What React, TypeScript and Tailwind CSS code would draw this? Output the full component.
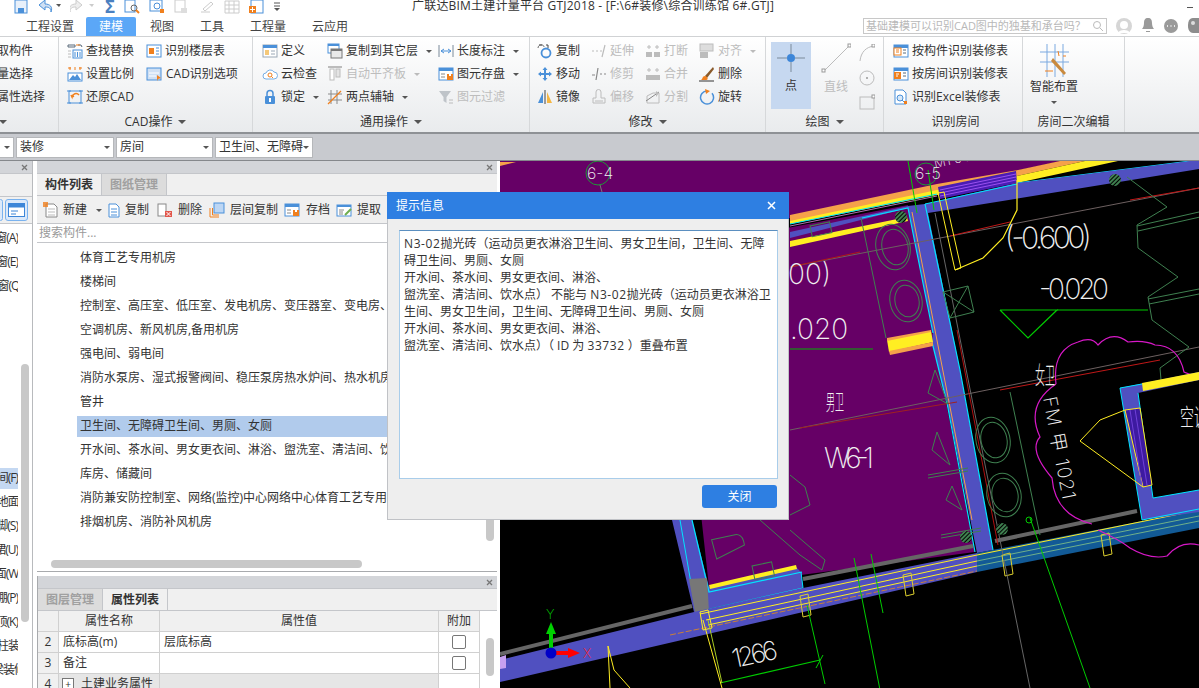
import React from 'react';

const B = '#4a90d9';
const O = '#f0801e';
const G = '#bcbcbc';
const D = '#5a6a7a';

// 16x16 ribbon glyphs
const icons: Record<string, React.ReactNode> = {
  find: (<><path d="M1 2h7v2H1zM11 2h3l1 2" fill="none" stroke={D} /><path d="M9 2h4" stroke={O} /><rect x="6" y="7" width="9" height="8" fill="none" stroke={B} /><path d="M8 9v5M10.500 9v5M13 9v5" stroke={B} /><path d="M1 8h3M1 11h3M1 14h3" stroke={G} /></>),
  floor: (<><rect x="1" y="2" width="14" height="12" fill="#fff" stroke={B} /><rect x="3" y="5" width="5" height="6" fill={O} /><path d="M10 5h3M10 8h3M10 11h3" stroke={B} /></>),
  scale: (<><path d="M1 2h3M12 2h3M8 1v3M3 1v3M13 1v3" stroke={O} /><rect x="1" y="7" width="14" height="8" fill="#fff" stroke={B} /><path d="M2 14l4-5 2 2 2-3 4 6z" fill={B} /></>),
  cadopt: (<><rect x="1" y="2" width="14" height="12" fill="#cfe0f4" stroke={B} /><path d="M3 7h10M3 10h7" stroke="#fff" /><path d="M11 9l4 3-3 1-1 2z" fill={O} /></>),
  restore: (<><rect x="2" y="2" width="12" height="12" fill="none" stroke={B} /><path d="M0 2h4M0 14h4M12 2h4M12 14h4" stroke={B} /><path d="M12 6a4 4 0 0 0-7 2l-1-2M5 8l2-1" fill="none" stroke={O} strokeWidth="1.500" /></>),
  define: (<><rect x="1" y="2" width="14" height="12" fill="#fff" stroke="#9aa7b5" /><rect x="1" y="2" width="14" height="3" fill={B} /><rect x="3" y="7" width="4" height="5" fill="#f5c878" /><path d="M9 8h4M9 11h4" stroke="#9aa7b5" /></>),
  cloud: (<><path d="M4 13a3 3 0 0 1 0-6 4.500 4.500 0 0 1 8-1 3.500 3.500 0 0 1 0 7z" fill="#fff" stroke="#77aee4" /><circle cx="8" cy="9" r="2" fill="none" stroke={O} /><path d="M9.500 10.500l1.500 1.500" stroke={O} /></>),
  lock: (<><path d="M5 7V4.500a3 3 0 0 1 6 0V7" fill="none" stroke={B} strokeWidth="1.500" /><rect x="3" y="7" width="10" height="8" rx="1" fill={B} /><rect x="7" y="9" width="2" height="4" fill="#fff" /></>),
  copyfl: (<><rect x="1" y="1" width="11" height="9" fill="#fff" stroke={B} /><rect x="1" y="1" width="11" height="2" fill={B} /><rect x="4" y="6" width="11" height="9" fill="#e9e9e9" stroke="#777" /><rect x="4" y="6" width="11" height="2" fill="#777" /></>),
  align: (<><path d="M1 1h14" stroke={G} strokeWidth="2" /><rect x="3" y="3" width="4" height="11" fill="#fff" stroke={G} /><rect x="9" y="3" width="4" height="8" fill="#e4e4e4" stroke={G} /></>),
  axis: (<><path d="M4 1v14M10 1v14M1 5h14M1 11h14" stroke="#8a8a8a" /><path d="M1 15L14 2" stroke={O} strokeWidth="1.200" /></>),
  dim: (<><path d="M1 2v12M15 2v12" stroke="#7a8a9a" /><path d="M3 8h10M3 8l3-2M3 8l3 2M13 8l-3-2M13 8l-3 2" stroke={B} fill="none" /></>),
  save: (<><rect x="1" y="2" width="14" height="12" fill="#fff" stroke={B} /><rect x="1" y="2" width="14" height="3" fill={B} /><path d="M3 8h4M3 11h4" stroke="#888" /><rect x="9" y="8" width="6" height="6" fill={O} /><rect x="11" y="8" width="2" height="2" fill="#fff" /></>),
  filter: (<><path d="M1 2h12L8.500 8v6l-3-2V8z" fill="#bfc4c9" /><path d="M11 11h4M11 14h4" stroke={G} /></>),
  copy: (<><path d="M2 2h3M9 2h2v3" stroke="#444" fill="none" /><circle cx="9" cy="10" r="4.500" fill="none" stroke={B} strokeWidth="1.800" /><path d="M1 5c0-4 6-4 6-1" fill="none" stroke="#666" /></>),
  extend: (<path d="M1 8h2M5 8h2M9 8h2M14 2l-3 12" stroke={G} fill="none" strokeWidth="1.200" />),
  brk: (<><rect x="1" y="9" width="6" height="5" fill={G} /><rect x="9" y="9" width="6" height="5" fill={G} /><path d="M4 2v4M2 4h4M12 2v4M10 4h4" stroke={G} /></>),
  alignR: (<><rect x="1" y="1" width="13" height="7" fill="#ddd" stroke={G} /><rect x="1" y="9" width="8" height="6" fill={G} /></>),
  move: (<path d="M8 1l2.500 3h-5zM8 15l-2.500-3h5zM1 8l3-2.500v5zM15 8l-3 2.500v-5zM7 4h2v8H7zM4 7h8v2H4z" fill={B} />),
  trim: (<path d="M1 9h3M9 8h2M13 8h2M7 2L5 14" stroke="#888" fill="none" strokeWidth="1.200" />),
  merge: (<><rect x="1" y="9" width="14" height="5" fill={G} /><path d="M4 2v4M2 4h4M12 2v4M10 4h4" stroke={G} /></>),
  del: (<><path d="M14 1L6 10l2 2 7-9z" fill="#8a5a2a" /><path d="M6 10c-3 0-2 3-4 4h5c2 0 2-2 1-3z" fill={O} /><path d="M0 15h15" stroke="#333" /></>),
  mirror: (<><path d="M1 14L6 3v11z" fill={B} /><path d="M8 1v14" stroke="#444" /><path d="M10 3l5 11h-5z" fill="#f5b642" /></>),
  offset: (<path d="M2 14V9h3V3a2 2 0 0 1 5 0v6h4v5zM4 12h8" fill="none" stroke={G} />),
  split: (<><path d="M2 14V7l6-3h6v10z" fill="none" stroke={G} /><path d="M1 12L14 3" stroke="#888" /><path d="M11 2l3 2-3 4z" fill={G} /></>),
  rotate: (<><path d="M8 2a6.500 6.500 0 1 0 5 2.300" fill="none" stroke={B} strokeWidth="1.500" /><path d="M6 0l5 2-4 3z" fill={O} /></>),
  byPart: (<><rect x="1" y="2" width="14" height="12" fill="#fff" stroke={B} /><rect x="1" y="2" width="14" height="3" fill={B} /><rect x="1" y="5" width="7" height="7" fill="#fff" stroke={O} /><path d="M3 7h3M3 9h3" stroke={O} /><path d="M10 7h3M10 10h3" stroke={D} /></>),
  byRoom: (<><rect x="1" y="2" width="14" height="12" fill="#fff" stroke={B} /><rect x="1" y="2" width="14" height="3" fill={B} /><rect x="1" y="6" width="7" height="7" fill={O} /><path d="M3 8h3M3 10h2" stroke="#fff" /><path d="M10 7h3M10 10h3" stroke={D} /></>),
  excel: (<><path d="M2 1h8l3 3v11H2z" fill="#fff" stroke={B} /><circle cx="7" cy="9" r="3" fill="#d7e8f8" stroke={B} /><path d="M9 11l2 2" stroke={B} /><rect x="11" y="12" width="3" height="3" fill={O} /></>),
  newItem: (<><path d="M3 2h8l3 3v10H3z" fill="#fff" stroke="#888" /><path d="M5 7h7M5 10h7M5 13h7" stroke="#bbb" /><rect x="0" y="0" width="5" height="5" fill={O} opacity=".8" /></>),
  dup: (<><path d="M3 2h7l3 3v10H3z" fill="#fff" stroke={B} /><path d="M5 7h6M5 10h6M5 13h6" stroke={B} /></>),
  remove: (<><rect x="1" y="2" width="8" height="12" fill="#fff" stroke="#888" /><rect x="8" y="9" width="7" height="6" fill="#e2574c" /><path d="M9.500 10l4 4M13.500 10l-4 4" stroke="#fff" /></>),
  floorCopy: (<><rect x="5" y="1" width="10" height="10" fill="#bcd6f4" stroke={B} /><path d="M1 15V6M1 15h9M3.500 13V6M3.500 13H10" stroke={O} fill="none" /></>),
  pick: (<><rect x="1" y="3" width="14" height="11" fill="#fff" stroke={B} /><rect x="1" y="3" width="14" height="2" fill={B} /><path d="M3 8h5M3 10h4M3 12h4" stroke="#888" /><path d="M9 13l6-6" stroke="#6fae4e" strokeWidth="2" /></>),
};

function Icon({ name, size = 16 }: { name: string; size?: number }) {
  return (
    <svg width={size} height={size} viewBox="0 0 16 16" className="shrink-0">
      {icons[name]}
    </svg>
  );
}

function Caret({ off }: { off?: boolean }) {
  return <span className={`inline-block w-0 h-0 border-x-[3px] border-x-transparent border-t-[3px] ml-[5px] ${off ? 'border-t-[#bbbbbb]' : 'border-t-[#555555]'}`} />;
}

function Item({ icon, text, caret, off, gap = 'gap-[3px]' }: { icon: string; text: string; caret?: boolean; off?: boolean; gap?: string }) {
  return (
    <div className={`flex items-center h-4 whitespace-nowrap text-xs ${gap} ${off ? 'text-[#bdbdbd]' : 'text-[#333333]'}`}>
      <Icon name={icon} />
      <span>{text}</span>
      {caret && <Caret off={off} />}
    </div>
  );
}

function Col({ className, children }: { className: string; children: React.ReactNode }) {
  return <div className={`flex flex-col gap-[7px] ${className}`}>{children}</div>;
}

function Group({ label, caret, className, foot = 'justify-center', children }: { label?: string; caret?: boolean; className: string; foot?: string; children: React.ReactNode }) {
  return (
    <div className={`flex flex-col h-full shrink-0 border-r border-[#d6d8da] ${className}`}>
      <div className="flex h-[74px] pt-[6px]">{children}</div>
      <div className={`flex-1 flex items-center text-xs text-[#333333] whitespace-nowrap pt-[1px] ${foot}`}>
        {label}
        {caret && <span className="w-0 h-0 ml-[6px] border-x-[4px] border-x-transparent border-t-[4px] border-t-[#555555]" />}
      </div>
    </div>
  );
}

function Ribbon() {
  return (
    <div className="h-[98px] flex overflow-hidden bg-gradient-to-b from-white to-[#e9ebed] border-y border-[#d0d2d4] border-b-2 border-b-[#8e9195]">
      <Group className="w-[59px]" caret foot="justify-start -ml-[7px]">
        <div className="flex flex-col gap-[7px] text-xs text-[#333333] -ml-[3px] whitespace-nowrap">
          <div className="h-4 leading-4">取构件</div>
          <div className="h-4 leading-4">量选择</div>
          <div className="h-4 leading-4">属性选择</div>
        </div>
      </Group>
      <Group className="w-[194px] pl-[8px]" label="CAD操作" caret foot="justify-center -ml-[8px]">
        <Col className="w-[79px]">
          <Item icon="find" text="查找替换" />
          <Item icon="scale" text="设置比例" />
          <Item icon="restore" text="还原CAD" />
        </Col>
        <Col className="w-[100px]">
          <Item icon="floor" text="识别楼层表" />
          <Item icon="cadopt" text="CAD识别选项" gap="gap-[4px]" />
        </Col>
      </Group>
      <Group className="w-[277px] pl-[9px]" label="通用操作" caret foot="justify-center -ml-[9px]">
        <Col className="w-[65px]">
          <Item icon="define" text="定义" />
          <Item icon="cloud" text="云检查" />
          <Item icon="lock" text="锁定" caret />
        </Col>
        <Col className="w-[111px]">
          <Item icon="copyfl" text="复制到其它层" caret />
          <Item icon="align" text="自动平齐板" caret off />
          <Item icon="axis" text="两点辅轴" caret />
        </Col>
        <Col className="w-[88px]">
          <Item icon="dim" text="长度标注" caret />
          <Item icon="save" text="图元存盘" caret />
          <Item icon="filter" text="图元过滤" off />
        </Col>
      </Group>
      <Group className="w-[236px] pl-[7px]" label="修改" caret foot="justify-center -ml-[7px]">
        <Col className="w-[54px]">
          <Item icon="copy" text="复制" />
          <Item icon="move" text="移动" />
          <Item icon="mirror" text="镜像" />
        </Col>
        <Col className="w-[54px]">
          <Item icon="extend" text="延伸" off />
          <Item icon="trim" text="修剪" off />
          <Item icon="offset" text="偏移" off />
        </Col>
        <Col className="w-[54px]">
          <Item icon="brk" text="打断" off />
          <Item icon="merge" text="合并" off />
          <Item icon="split" text="分割" off />
        </Col>
        <Col className="w-[54px]">
          <Item icon="alignR" text="对齐" caret off />
          <Item icon="del" text="删除" />
          <Item icon="rotate" text="旋转" />
        </Col>
      </Group>
      <Group className="w-[118px] pl-[5px]" label="绘图" caret foot="justify-center -ml-[5px]">
        <div className="w-[40px] h-[67px] -mt-[1px] bg-[#c6d8f0] flex flex-col items-center text-xs text-[#333333]">
          <svg width="30" height="30" viewBox="0 0 30 30" className="mt-[1px]">
            <path d="M15 1v10M15 19v10M1 15h10M19 15h10" stroke="#7a8a9a" />
            <circle cx="15" cy="15" r="4" fill="#3d86d8" />
          </svg>
          <span className="mt-[5px]">点</span>
        </div>
        <div className="w-[40px] ml-[5px] flex flex-col items-center text-xs text-[#bdbdbd]">
          <svg width="30" height="30" viewBox="0 0 30 30">
            <path d="M3 28L28 3" stroke="#bcbcbc" />
            <rect x="1" y="26" width="3" height="3" fill="#fff" stroke="#999" />
            <rect x="27" y="1" width="3" height="3" fill="#fff" stroke="#999" />
          </svg>
          <span className="mt-[6px]">直线</span>
        </div>
        <div className="ml-[3px] flex flex-col gap-[7px] pt-[1px]">
          <svg width="16" height="18" viewBox="0 0 16 18"><path d="M1 17C2 8 7 3 15 2" fill="none" stroke={G} /><rect x="13" y="0" width="3" height="3" fill="#fff" stroke="#999" /></svg>
          <svg width="16" height="18" viewBox="0 0 16 18"><circle cx="8" cy="9" r="7" fill="none" stroke={G} /><circle cx="8" cy="9" r="1" fill="#999" /></svg>
          <svg width="16" height="16" viewBox="0 0 16 16"><rect x="1" y="3" width="14" height="12" fill="none" stroke={G} /><rect x="13" y="1" width="3" height="3" fill="#fff" stroke="#999" /></svg>
        </div>
      </Group>
      <Group className="w-[139px] pl-[9px]" label="识别房间" foot="justify-center -ml-[4px]">
        <Col className="w-[120px]">
          <Item icon="byPart" text="按构件识别装修表" />
          <Item icon="byRoom" text="按房间识别装修表" />
          <Item icon="excel" text="识别Excel装修表" />
        </Col>
      </Group>
      <Group className="w-[102px]" label="房间二次编辑">
        <div className="w-[60px] ml-[1px] flex flex-col items-center text-xs text-[#333333] whitespace-nowrap">
          <svg width="30" height="34" viewBox="0 0 30 34">
            <path d="M1 9h29M1 19h29M8 1v34M16 1v34M24 1v34" stroke="#7aa9e0" />
            <path d="M14 15l13 15-2 2L12 18z" fill="#c98a3e" />
            <path d="M6 28h8M19 8l1 5M24 13h3" stroke={O} />
          </svg>
          <span className="mt-[2px]">智能布置</span>
          <span className="mt-[6px] w-0 h-0 border-x-[3px] border-x-transparent border-t-[3px] border-t-[#555555]" />
        </div>
      </Group>
      <div className="flex-1" />
    </div>
  );
}

function Combo({ className, text }: { className: string; text: string }) {
  return (
    <div className={`h-[21px] bg-white border border-[#b5b7ba] flex items-center justify-between pl-[3px] pr-[3px] text-xs text-[#333333] whitespace-nowrap ${className}`}>
      <span>{text}</span>
      <span className="w-0 h-0 border-x-[3px] border-x-transparent border-t-[3px] border-t-[#555555]" />
    </div>
  );
}

function PanelHeader() {
  return (
    <div className="h-3 shrink-0 bg-[#d3d5d9] flex items-center justify-end pr-[4px] text-[#777777]">
      <svg width="7" height="7" viewBox="0 0 7 7"><path d="M1 1l5 5M6 1L1 6" stroke="#777" strokeWidth="1.300" /></svg>
    </div>
  );
}

function Tabs({ first, second, active }: { first: string; second: string; active: 0 | 1 }) {
  const on = 'bg-[#f0f0f0] text-[#333333] font-bold';
  const off = 'bg-[#dcdcdc] text-[#a0a0a0] font-bold';
  return (
    <div className="h-[23px] shrink-0 flex bg-[#f0f0f0] border-t border-[#c4c6ca] border-b border-b-[#c4c6ca] text-xs">
      <div className={`w-[65px] flex items-center justify-center border-r border-[#c4c6ca] ${active === 0 ? on : off}`}>{first}</div>
      <div className={`w-[65px] flex items-center justify-center border-r border-[#c4c6ca] ${active === 1 ? on : off}`}>{second}</div>
    </div>
  );
}

const leftRows = [
  { text: '门联窗(A)', cls: '' },
  { text: '飘窗(E)', cls: '' },
  { text: '老虎窗(Q)', cls: 'translate-x-[4px]' },
  { text: '', cls: '' },
  { text: '', cls: '' },
  { text: '', cls: '' },
  { text: '', cls: '' },
  { text: '', cls: '' },
  { text: '', cls: '' },
  { text: '', cls: '' },
  { text: '房间(F)', cls: 'bg-[#c4d8f2]' },
  { text: '楼地面(V)', cls: 'translate-x-[12px]' },
  { text: '踢脚(S)', cls: '' },
  { text: '墙裙(U)', cls: '' },
  { text: '墙面(W)', cls: 'translate-x-[3px]' },
  { text: '天棚(P)', cls: '' },
  { text: '吊顶(K)', cls: '' },
  { text: '独立柱装修', cls: 'translate-x-[12px]' },
  { text: '单梁装修', cls: 'translate-x-[7px]' },
];

const roomRows = [
  '体育工艺专用机房',
  '楼梯间',
  '控制室、高压室、低压室、发电机房、变压器室、变电房、配电室',
  '空调机房、新风机房,备用机房',
  '强电间、弱电间',
  '消防水泵房、湿式报警阀间、稳压泵房热水炉间、热水机房',
  '管井',
  '卫生间、无障碍卫生间、男厕、女厕',
  '开水间、茶水间、男女更衣间、淋浴、盥洗室、清洁间、饮水点',
  '库房、储藏间',
  '消防兼安防控制室、网络(监控)中心网络中心体育工艺专用机房',
  '排烟机房、消防补风机房',
];

const tools = [
  { icon: 'newItem', text: '新建', caret: true, cls: 'w-[63px]', gap: 'gap-[4px]' },
  { icon: 'dup', text: '复制', cls: 'w-[51px]', gap: 'gap-[3px]' },
  { icon: 'remove', text: '删除', cls: 'w-[52px]', gap: 'gap-[5px]' },
  { icon: 'floorCopy', text: '层间复制', cls: 'w-[75px]', gap: 'gap-[5px]' },
  { icon: 'save', text: '存档', cls: 'w-[52px]', gap: 'gap-[6px]' },
  { icon: 'pick', text: '提取', cls: 'w-[50px]', gap: 'gap-[5px]' },
];

function LeftPanel() {
  return (
    <div className="w-[33px] shrink-0 flex flex-col bg-white border-r border-[#b8babd]">
      <PanelHeader />
      <div className="h-[23px] bg-[#f0f0f0] border-t border-[#c4c6ca] shrink-0" />
      <div className="h-[28px] shrink-0 bg-[#f0f0f0] border-t border-[#c4c6ca] border-b border-b-[#c4c6ca] flex items-center gap-[2px]">
        <div className="w-[5px] -ml-[2px] h-[22px] rounded-[3px] border border-[#7ab2ee] bg-[#dbe9fa]" />
        <div className="w-[23px] h-[22px] rounded-[3px] border border-[#7ab2ee] bg-[#dbe9fa] flex items-center justify-center">
          <svg width="17" height="14" viewBox="0 0 17 14"><rect x="0.500" y="0.500" width="16" height="13" fill="#fff" stroke="#3d86d8" /><rect x="0.500" y="0.500" width="16" height="4" fill="#3d86d8" /><path d="M3 8h7M3 11h5" stroke="#3d86d8" /></svg>
        </div>
      </div>
      <div className="relative flex-1 overflow-hidden pt-[2px]">
        {leftRows.map((r, i) => (
          <div key={i} className="h-6 w-[18px] overflow-hidden flex items-center">
            <div className={`w-full h-[21px] flex items-center justify-end text-xs tracking-[-1px] text-[#333333] whitespace-nowrap ${r.cls}`}>{r.text}</div>
          </div>
        ))}
        <div className="absolute left-[21px] top-[140px] w-2 h-[258px] rounded bg-[#c8c8c8]" />
      </div>
    </div>
  );
}

function ComponentPanel() {
  return (
    <div className="h-[411px] shrink-0 flex flex-col border-b border-[#a8aaad]">
      <PanelHeader />
      <Tabs first="构件列表" second="图纸管理" active={0} />
      <div className="h-[27px] shrink-0 bg-[#f0f0f0] flex items-center pl-[6px] pt-[1px] text-xs text-[#333333]">
        {tools.map((t) => (
          <div key={t.text} className={`flex items-center whitespace-nowrap ${t.cls} ${t.gap}`}>
            <Icon name={t.icon} />
            <span>{t.text}</span>
            {t.caret && <Caret />}
          </div>
        ))}
      </div>
      <div className="h-5 shrink-0 bg-white border-y border-[#c4c6ca] flex items-center pl-[2px] text-xs text-[#9a9a9a]">搜索构件...</div>
      <div className="relative flex-1 bg-white overflow-hidden pt-[3px]">
        {roomRows.map((r, i) => (
          <div key={r} className="h-6 pl-[40px] flex items-center">
            <div className={`w-full h-[21px] pl-[3px] flex items-center text-xs text-[#333333] whitespace-nowrap overflow-hidden ${i === 7 ? 'bg-[#b1cbec]' : ''}`}>{r}</div>
          </div>
        ))}
        <div className="absolute right-[3px] top-[225px] w-2 h-[73px] rounded bg-[#c8c8c8]" />
        <div className="absolute left-[14px] bottom-[3px] w-[311px] h-2 rounded bg-[#c8c8c8]" />
      </div>
    </div>
  );
}

const cell = 'flex items-center border-r border-b border-[#d0d0d0] text-xs text-[#333333]';

function Check() {
  return <span className="w-[14px] h-[14px] rounded-[2px] border border-[#777777] bg-white" />;
}

function PropertyPanel() {
  return (
    <div className="flex-1 mt-[4px] flex flex-col overflow-hidden bg-white border-l border-[#a8aaad]">
      <PanelHeader />
      <Tabs first="图层管理" second="属性列表" active={1} />
      <div className="relative flex-1 overflow-hidden">
        <div className="grid grid-cols-[21px_101px_279px_41px] auto-rows-[21px] w-[442px]">
          <div className={`${cell} bg-[#f0f0f0]`} />
          <div className={`${cell} bg-[#f0f0f0] justify-center`}>属性名称</div>
          <div className={`${cell} bg-[#f0f0f0] justify-center`}>属性值</div>
          <div className={`${cell} bg-[#f0f0f0] justify-center`}>附加</div>
          <div className={`${cell} bg-[#f0f0f0] justify-center`}>2</div>
          <div className={`${cell} pl-[4px]`}>底标高(m)</div>
          <div className={`${cell} pl-[4px]`}>层底标高</div>
          <div className={`${cell} justify-center`}><Check /></div>
          <div className={`${cell} bg-[#f0f0f0] justify-center`}>3</div>
          <div className={`${cell} pl-[4px]`}>备注</div>
          <div className={cell} />
          <div className={`${cell} justify-center`}><Check /></div>
          <div className={`${cell} bg-[#f0f0f0] justify-center`}>4</div>
          <div className={`${cell} pl-[3px] bg-[#e6e6e6] gap-[7px] whitespace-nowrap`}>
            <span className="w-3 h-3 border border-[#777777] bg-white flex items-center justify-center leading-none text-[10px]">+</span>
            土建业务属性
          </div>
          <div className={`${cell} bg-[#e6e6e6]`} />
          <div className={cell} />
        </div>
        <div className="absolute right-[3px] top-[27px] w-2 h-[38px] rounded bg-[#c8c8c8]" />
      </div>
    </div>
  );
}

function CadCanvas() {
  const thin = "font-['Inter','Liberation_Sans','Noto_Sans_CJK_SC',sans-serif] font-extralight";
  const dark = '#3f8050';
  return (
    <svg width="699" height="527" viewBox="500 161 699 527" className="block shrink-0 bg-black">
      <defs>
        <pattern id="hatch" width="3" height="3" patternUnits="userSpaceOnUse" patternTransform="rotate(-45)">
          <rect width="3" height="3" fill="#3f8050" />
          <rect width="3" height="1" fill="#000" />
        </pattern>
      </defs>
      {/* rooms */}
      <polygon points="500,161 1062,161 790,218 500,280" fill="#660066" />
      <polygon points="672,250 908,205 975,552 801,575 796,567 709,587" fill="#660066" />
      {/* outer bands */}
      <polygon points="500,162 516,162 500,166" fill="#f5a14a" />
      <polygon points="790,215 937,184 1018,170 1060,161 1085,161 1017,176 937,192 790,222" fill="#f5a14a" />
      <polygon points="790,221 937,190 1017,176 1085,161 1118,161 1017,183 937,195 790,224" fill="#ffee22" />
      <polyline points="790,224 937,194" stroke="#00e5ff" fill="none" />
      <polyline points="1017,183 1190,161" stroke="#00e5ff" fill="none" />
      <polygon points="790,232 908,206 925,204 1017,183 1190,161 1199,161 1199,169 928,213 960,370 993,550 977,553 947,403 932,342 933,333 908,208 790,238" fill="#5050c0" />
      <polyline points="790,226 937,196" stroke="#b070b0" fill="none" />
      <polyline points="862,218 908,208 933,333" stroke="#00e5ff" fill="none" strokeWidth="1.200" />
      <polyline points="925,204 960,370 993,550" stroke="#00e5ff" fill="none" strokeWidth="1.200" />
      <polyline points="932,342 947,403 975,552" stroke="#00e5ff" fill="none" strokeWidth="1.200" />
      <polyline points="925,204 1017,184" stroke="#00e5ff" fill="none" />
      <polygon points="938,187 1016,171 1017,183 940,199" fill="#4a1cb4" />
      <path d="M940,190l76-16M940,193l76-16M940,196l76-16" stroke="#9a50f0" />
      <polygon points="790,241 907,217 908,221 790,247" fill="#ffee22" />
      <polygon points="887,340 931,331 933,342 889,352" fill="#ffee22" />
      <polygon points="887,338 931,330 931,332 887,341" fill="#f5a14a" />
      <polygon points="889,351 933,342 933,346 890,355" fill="#f5a14a" />
      <polyline points="912,212 972,520" stroke="#f5a14a" fill="none" />
      {/* left column and bottom wall */}
      <polygon points="672,520 692,520 709,587 796,567 801,572 803,588 694,612" fill="#5050c0" />
      <polyline points="692,520 709,592 802,572" stroke="#00e5ff" fill="none" strokeWidth="1.200" />
      <polyline points="680,520 696,612 803,588 801,572" stroke="#00e5ff" fill="none" />
      <polygon points="689,579 707,578 709,612 695,612" fill="#777" />
      <polygon points="709,585 796,565 797,569 710,589" fill="#ffee22" />
      <polyline points="500,654 692,606" stroke="#666" strokeWidth="4" fill="none" />
      <polyline points="803,579 973,546" stroke="#666" strokeWidth="4" fill="none" />
      <polyline points="995,541 1137,511" stroke="#666" strokeWidth="4" fill="none" />
      <polygon points="500,660 694,612 803,588 977,553 977,572 500,682" fill="#5050c0" />
      <polygon points="977,553 1199,510 1199,528 977,572" fill="#125a96" />
      <polygon points="500,657 506,655 506,668 500,669" fill="#c7a0f0" />
      <polyline points="700,614 977,555 1199,510" stroke="#ffee22" fill="none" />
      <polyline points="706,620 977,561" stroke="#ffee22" fill="none" />
      <polyline points="708,625 977,566" stroke="#ffee22" fill="none" />
      <polyline points="977,561 1199,516" stroke="#6fb08a" fill="none" />
      <polyline points="977,566 1199,521" stroke="#6fb08a" fill="none" />
      <polyline points="670,635 977,571" stroke="#c9803a" fill="none" strokeDasharray="6 2" />
      {[[800, 596], [903, 575], [1002, 555], [1101, 535]].map(([x, y]) => (
        <polygon key={x} points={`${x},${y} ${x + 8},${y - 2} ${x + 11},${y + 19} ${x + 3},${y + 21}`} fill="none" stroke="#dccf2e" />
      ))}
      <polygon points="700,612 708,610 712,628 703,630" fill="none" stroke="#ffee22" />
      {/* bright green dims */}
      <polyline points="854,558 882,700" stroke="#00cc00" fill="none" />
      <polyline points="871,554 883,613" stroke="#00cc00" fill="none" />
      <polyline points="1030,518 1090,688" stroke="#00cc00" fill="none" />
      <circle cx="1029" cy="520" r="3" fill="none" stroke="#00cc00" />
      <polyline points="807,605 825,684" stroke="#00cc00" fill="none" />
      <polyline points="720,683 820,660" stroke="#00cc00" fill="none" strokeWidth="1.200" />
      <polyline points="816,668 823,655" stroke="#00cc00" fill="none" />
      <polyline points="703,620 722,688" stroke="#ffee22" fill="none" />
      <polyline points="708,620 722,683" stroke="#aacc22" fill="none" />
      <polyline points="1004,560 1030,688" stroke="#666" fill="none" />
      <polyline points="608,646 614,670 630,688" stroke="#ffee22" fill="none" />
      <polyline points="608,646 610,688" stroke="#ffee22" fill="none" />
      <polyline points="1000,310 1057,310 1028,338 1000,310" stroke="#00cc00" fill="none" strokeWidth="1.200" />
      <polyline points="1057,310 1148,310" stroke="#00cc00" fill="none" strokeWidth="1.200" />
      <polyline points="790,349 873,349" stroke="#00b000" fill="none" />
      <line x1="908" y1="161" x2="917" y2="213" stroke="#00cc00" />
      <line x1="928" y1="170" x2="934" y2="210" stroke="#00cc00" />
      {/* axis lines */}
      <line x1="790" y1="267" x2="1199" y2="188" stroke="#6d6060" />
      <line x1="790" y1="267" x2="860" y2="252" stroke="#b01818" />
      <line x1="950" y1="236" x2="1010" y2="222" stroke="#c01818" />
      <line x1="1130" y1="200" x2="1199" y2="188" stroke="#c01818" />
      <line x1="790" y1="430" x2="1199" y2="347" stroke="#6d6060" />
      <line x1="800" y1="428" x2="957" y2="402" stroke="#a02020" />
      <line x1="1000" y1="390" x2="1160" y2="360" stroke="#c01818" />
      <line x1="935" y1="213" x2="1003" y2="555" stroke="#666" />
      <line x1="957" y1="330" x2="998" y2="545" stroke="#b01010" />
      <line x1="1010" y1="392" x2="1040" y2="535" stroke={dark} />
      {/* fittings */}
      <g fill="none" stroke={dark}>
        <ellipse cx="893" cy="247" rx="17" ry="23" transform="rotate(-12 893 247)" />
        <ellipse cx="895" cy="247" rx="13" ry="18" transform="rotate(-12 895 247)" />
        <ellipse cx="906" cy="301" rx="16" ry="21" transform="rotate(-12 906 301)" />
        <ellipse cx="907" cy="301" rx="12" ry="16" transform="rotate(-12 907 301)" />
        <ellipse cx="993" cy="440" rx="17" ry="23" transform="rotate(-12 993 440)" />
        <ellipse cx="994" cy="440" rx="13" ry="18" transform="rotate(-12 994 440)" />
        <ellipse cx="1004" cy="495" rx="17" ry="22" transform="rotate(-12 1004 495)" />
        <ellipse cx="1005" cy="495" rx="13" ry="17" transform="rotate(-12 1005 495)" />
        <polygon points="943,292 968,286 974,312 950,318" />
        <path d="M943,292l31,20M968,286l-18,32" />
        <polyline points="861,218 886,338" />
        <rect x="810" y="226" width="20" height="11" transform="rotate(-12 810 226)" />
        <polygon points="935,370 948,404 928,393" />
        <polygon points="937,432 950,465 932,450" />
        <polygon points="952,486 962,510 946,500" />
        <path d="M928,475l40-7M928,478l40-7" />
        <path d="M941,535l40-7M941,538l40-7" />
        <polyline points="790,475 805,487 810,505 790,515" />
        <polyline points="790,530 825,560 822,570" />
        <path d="M713,537h24a7,8 0 0 1 7,8v4l-30,8z" transform="rotate(-12 725 545)" />
        <rect x="752" y="566" width="20" height="14" transform="rotate(-12 752 566)" />
        <polyline points="780,495 760,520 800,555 822,570" />
        <polyline points="1127,177 1167,207 1137,225 1138,248 1178,277 1148,297 1152,320 1189,347 1160,368 1161,380" />
        <path d="M1137,226l62-14M1138,231l62-14M1148,299l51-10M1149,304l50-10" />
      </g>
      <g fill="url(#hatch)">
        <circle cx="901" cy="217" r="6" />
        <circle cx="1115" cy="180" r="6" />
        <circle cx="1002" cy="529" r="6" />
        <circle cx="966" cy="537" r="6" />
      </g>
      {/* magenta cloud */}
      <path
        d="M1056,384 Q1052,350 1078,342 Q1092,336 1098,345 Q1112,330 1128,342 Q1145,340 1155,345 Q1178,345 1184,372 L1199,378 M1056,384 Q1025,405 1040,437 Q1028,450 1052,478 Q1055,515 1092,524 M1098,530 Q1120,540 1130,548 Q1150,560 1167,556 Q1180,540 1199,545"
        fill="none"
        stroke="#d818c8"
        strokeWidth="1.200"
      />
      {/* right room */}
      <polygon points="1120,388 1199,372 1199,380 1138,393 1153,498 1199,490 1199,512 1142,520" fill="#5050c0" />
      <polygon points="1142,383 1199,372 1199,380 1143,391" fill="#ffee22" />
      <polyline points="1142,384 1120,388 1142,520 1199,509" stroke="#00e5ff" fill="none" />
      <polyline points="1138,393 1153,498 1199,490" stroke="#00e5ff" fill="none" />
      <polygon points="1125,410 1140,408 1152,485 1143,487" fill="#3d1aa0" stroke="#ffee22" />
      <path d="M1130,410l12,76M1135,409l12,76" stroke="#7040d8" />
      <polyline points="1125,410 1100,420 1080,441 1143,487" stroke="#ffee22" fill="none" />
      <polyline points="955,270 983,258 1003,238 1017,210 1017,180" stroke="#ffee22" fill="none" strokeWidth="1.200" />
      <polygon points="938,193 944,192 961,268 955,270" fill="none" stroke="#ffee22" />
      {/* grid bubbles */}
      <circle cx="598" cy="173" r="12" fill="none" stroke="#1d9a36" />
      <line x1="600" y1="185" x2="602" y2="192" stroke="#777" />
      <circle cx="926" cy="174" r="11" fill="none" stroke="#1d9a36" />
      {/* cad text */}
      <g fill="#f0f0f0" className={thin}>
        <text x="587" y="179" fontSize="16">6-4</text>
        <text x="915" y="179" fontSize="16">6-5</text>
        <text x="935" y="168" fontSize="13" transform="rotate(-12 935 168)">M1 0 2</text>
        <text x="1005" y="249" fontSize="30" textLength="87" transform="rotate(-1 1005 249)">(-0.600)</text>
        <text x="1039" y="299" fontSize="28" textLength="70">-0.020</text>
        <text x="788" y="284" fontSize="28">00)</text>
        <text x="790" y="339" fontSize="28">.020</text>
        <text x="824" y="468" fontSize="28" textLength="50">W6-1</text>
        <text x="826" y="410" fontSize="22" textLength="18" lengthAdjust="spacingAndGlyphs">男卫</text>
        <text x="1035" y="384" fontSize="24" textLength="20" lengthAdjust="spacingAndGlyphs">女卫</text>
        <text x="1180" y="426" fontSize="24" textLength="28" lengthAdjust="spacingAndGlyphs">空调</text>
        <text x="1043" y="398" fontSize="19" textLength="104" transform="rotate(79 1043 398)">FM 甲 1021</text>
        <text x="734" y="668" fontSize="26" textLength="46" transform="rotate(-12 734 668)">1266</text>
      </g>
      {/* ucs */}
      <rect x="549" y="630" width="4" height="20" fill="#00d000" />
      <polygon points="551,622 556,634 546,634" fill="#00d000" />
      <text x="546" y="619" fontSize="13" fill="#00d000" className={thin}>Y</text>
      <rect x="553" y="651" width="17" height="4" fill="#ff0000" />
      <polygon points="580,653 568,648 568,658" fill="#ff0000" />
      <circle cx="551" cy="653" r="5.500" fill="#0000c8" />
      <text x="583" y="658" fontSize="13" fill="#ff2020" className={thin}>X</text>
    </svg>
  );
}

function Dialog() {
  const latin = 'tracking-[0.6px]';
  return (
    <div className="absolute left-[387px] top-[192px] w-[402px] h-[328px] flex flex-col bg-[#eeeeee] border border-[#c0c2c6]">
      <div className="h-[27px] shrink-0 -mx-px -mt-px bg-[#2e7fe2] flex items-center justify-between pl-[9px] pr-[13px] text-xs text-white">
        <span>提示信息</span>
        <svg width="9" height="9" viewBox="0 0 9 9"><path d="M1 1l7 7M8 1L1 8" stroke="#fff" strokeWidth="1.500" /></svg>
      </div>
      <div className="ml-[11px] mt-[11px] w-[379px] h-[249px] bg-white border border-[#a9cdea] border-t-[#5b8fc0] pt-[4px] pl-[4px] text-xs leading-[17px] text-[#333333] overflow-hidden whitespace-nowrap">
        <div><span className={latin}>N3-02</span>抛光砖（运动员更衣淋浴卫生间、男女卫生间，卫生间、无障</div>
        <div>碍卫生间、男厕、女厕</div>
        <div>开水间、茶水间、男女更衣间、淋浴、</div>
        <div>盥洗室、清洁间、饮水点） 不能与 <span className={latin}>N3-02</span>抛光砖（运动员更衣淋浴卫</div>
        <div>生间、男女卫生间，卫生间、无障碍卫生间、男厕、女厕</div>
        <div>开水间、茶水间、男女更衣间、淋浴、</div>
        <div>盥洗室、清洁间、饮水点）（ ID 为 <span className={latin}>33732</span> ）重叠布置</div>
      </div>
      <div className="mt-[6px] mr-[11px] self-end w-[75px] h-[23px] rounded-[3px] bg-[#2e7fe2] text-xs text-white flex items-center justify-center">关闭</div>
    </div>
  );
}

export default function App() {
  const tabs = [
    { t: '工程设置', c: 'w-[48px] ml-[26px] mr-[12px]' },
    { t: '建模', c: 'w-[50px] bg-[#5ba7f7] text-white rounded-t-[2px]' },
    { t: '视图', c: 'w-[24px] ml-[14px]' },
    { t: '工具', c: 'w-[24px] ml-[26px]' },
    { t: '工程量', c: 'w-[36px] ml-[26px]' },
    { t: '云应用', c: 'w-[36px] ml-[26px]' },
  ];
  return (
    <div className="relative w-[1199px] h-[688px] overflow-hidden flex flex-col bg-white font-['Open_Sans','Noto_Sans_CJK_SC',sans-serif]">
      {/* quick access + title */}
      <div className="h-[14px] shrink-0 flex overflow-hidden">
        <div className="w-[412px] flex items-end gap-[9px] pl-[14px] shrink-0">
          <svg width="14" height="14" viewBox="0 0 14 14"><rect x="1" y="0" width="12" height="13" fill="#e8f0fa" stroke="#4a90d9" /><rect x="4" y="8" width="6" height="5" fill="#4a90d9" /></svg>
          <svg width="24" height="14" viewBox="0 0 24 14"><path d="M8 0L2 5l6 5V7c4 0 6 1 6 5 2-5-1-8-6-8z" fill="#cfe0f4" stroke="#4a90d9" /><path d="M19 4l3 3 2-3z" fill="#555" /></svg>
          <svg width="24" height="14" viewBox="0 0 24 14"><path d="M6 0l6 5-6 5V7C2 7 0 8 0 12-2 7 1 4 6 4z" fill="#eee" stroke="#ccc" /><path d="M19 4l3 3 2-3z" fill="#ccc" /></svg>
          <span className="text-[17px] leading-[14px] font-bold text-[#4a80c0] ml-[2px]">Σ</span>
          <svg width="16" height="14" viewBox="0 0 16 14"><rect x="1" y="0" width="10" height="12" fill="#fff" stroke="#4a90d9" /><circle cx="10" cy="8" r="3" fill="none" stroke="#666" /><path d="M12 10l3 3" stroke="#f0801e" strokeWidth="2" /></svg>
          <svg width="16" height="14" viewBox="0 0 16 14"><rect x="1" y="0" width="12" height="11" fill="#fff" stroke="#4a90d9" /><circle cx="8" cy="6" r="3" fill="none" stroke="#4a90d9" /><rect x="11" y="9" width="4" height="4" fill="#f0801e" /></svg>
          <svg width="16" height="14" viewBox="0 0 16 14"><rect x="1" y="0" width="10" height="12" fill="#fff" stroke="#ccc" /><rect x="7" y="8" width="6" height="5" fill="#ddd" /></svg>
          <svg width="16" height="14" viewBox="0 0 16 14"><path d="M2 12h9M4 9l8-7 2 2-8 7z" fill="none" stroke="#ccc" /></svg>
          <svg width="16" height="14" viewBox="0 0 16 14"><path d="M1 1h14v12H1zM1 5h14M1 9h14M5 1v12M10 1v12" fill="none" stroke="#ccc" /></svg>
          <svg width="15" height="14" viewBox="0 0 15 14"><rect x="2" y="0" width="12" height="13" fill="#fff" stroke="#4a90d9" /><rect x="0" y="6" width="7" height="7" fill="#f0801e" /><path d="M3.500 7v5M1 9.500h5" stroke="#fff" /></svg>
          <svg width="8" height="14" viewBox="0 0 8 14"><path d="M1 3h6M1 6h6" stroke="#555" /><path d="M1 8h6l-3 3z" fill="#555" /></svg>
        </div>
        <div className="text-xs leading-[11px] tracking-[0.2px] text-[#333333] whitespace-nowrap">广联达BIM土建计量平台 GTJ2018 - [F:\6#装修\综合训练馆 6#.GTJ]</div>
        <div className="ml-auto w-[20px] pr-[6px] pt-[7px] shrink-0"><div className="ml-auto w-[6px] h-px bg-[#555555]" /></div>
      </div>
      {/* ribbon tabs */}
      <div className="h-[22px] shrink-0 flex items-end">
        <div className="flex h-[19px] text-xs text-[#444444] whitespace-nowrap">
          {tabs.map((x) => (
            <div key={x.t} className={`flex items-center justify-center ${x.c}`}>{x.t}</div>
          ))}
        </div>
        <div className="ml-auto self-start mt-[3px] flex items-center gap-[8px] shrink-0">
          <div className="w-[244px] h-[16px] border border-[#c8c8c8] flex items-center justify-between px-[2px] text-[11px] text-[#b8b8b8] whitespace-nowrap overflow-hidden">
            <span>基础建模可以识别CAD图中的独基和承台吗？</span>
            <svg width="12" height="12" viewBox="0 0 12 12"><circle cx="5" cy="5" r="3.500" fill="none" stroke="#bbb" /><path d="M8 8l3 3" stroke="#bbb" /></svg>
          </div>
          <svg width="18" height="18" viewBox="0 0 18 18"><circle cx="9" cy="9" r="8" fill="#d6d6d6" /><circle cx="9" cy="8" r="4" fill="#fff" /><path d="M3 16c1-4 11-4 12 0z" fill="#fff" /></svg>
          <svg width="14" height="18" viewBox="0 0 14 18"><path d="M7 1c3 0 4 2 4 5 0 3 1 5 2 6H1c1-1 2-3 2-6 0-3 1-5 4-5zM5 14h4v1H5z" fill="#9a9a9a" /></svg>
          <svg width="16" height="16" viewBox="0 0 16 16"><circle cx="8" cy="8" r="7" fill="#9a9a9a" /><path d="M4 8h1M7.500 8h1M11 8h1" stroke="#fff" strokeWidth="1.500" /></svg>
          <svg width="12" height="18" viewBox="0 0 12 18"><path d="M12 1H6C2 1 1 5 1 9s2 7 5 7h6z" fill="#8d8d8d" /><circle cx="6" cy="6" r="2" fill="#ddd" /></svg>
        </div>
      </div>
      <Ribbon />
      {/* combos */}
      <div className="h-[26px] shrink-0 bg-[#c8cacf] flex items-center gap-[2px]">
        <Combo className="w-[14px] border-l-0 justify-end" text="" />
        <Combo className="w-[98px]" text="装修" />
        <Combo className="w-[97px]" text="房间" />
        <Combo className="w-[98px]" text="卫生间、无障碍" />
      </div>
      {/* main */}
      <div className="flex-1 flex overflow-hidden border-t border-[#85888c] bg-white">
        <LeftPanel />
        <div className="w-[4px] shrink-0 bg-white" />
        <div className="w-[460px] shrink-0 flex flex-col bg-white">
          <ComponentPanel />
          <PropertyPanel />
        </div>
        <div className="w-[3px] shrink-0 bg-white" />
        <CadCanvas />
      </div>
      <Dialog />
    </div>
  );
}
